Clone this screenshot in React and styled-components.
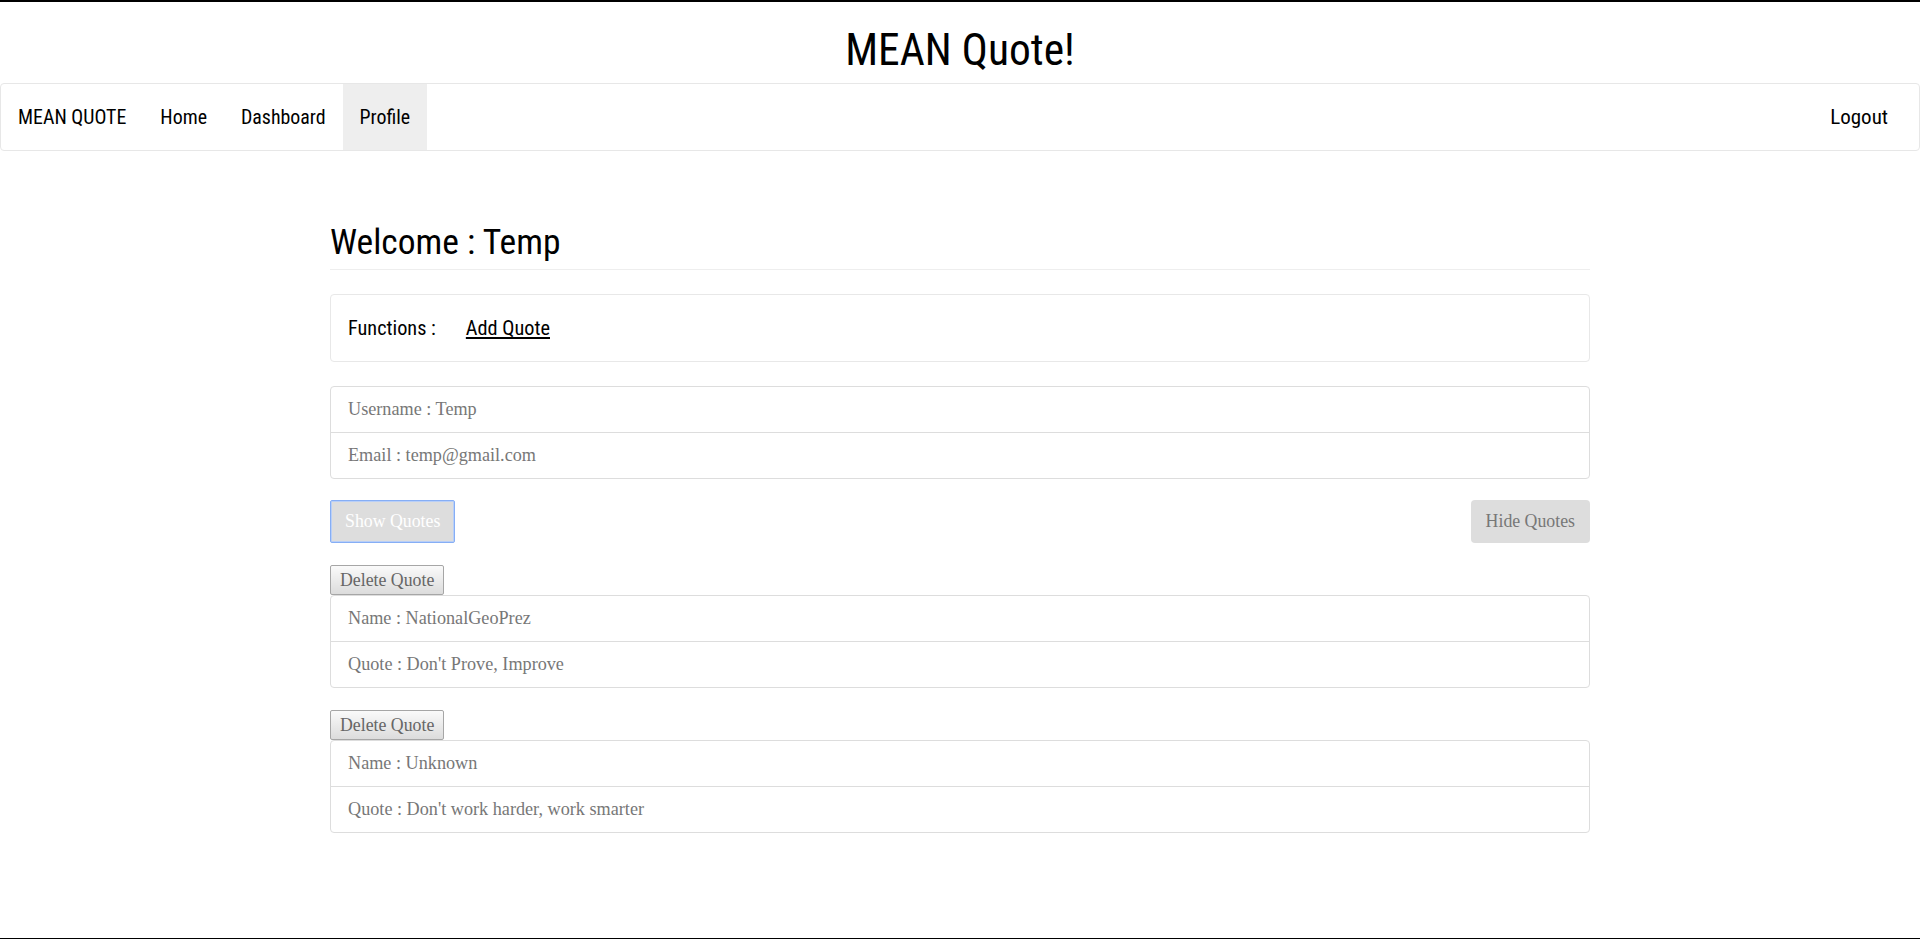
import React from "react";
import styled, { createGlobalStyle } from 'styled-components'

const GlobalStyle = createGlobalStyle`
    html, body {
        margin : 0;
        padding : 0;
        background : #fff;
    }
    body {
        font-family : "Liberation Serif", serif;
    }
`

const narrow = `"Roboto Condensed", "Roboto", sans-serif`

const Page = styled.div`
    height : 939px;
    box-sizing : border-box;
    border-top : 2px solid #000;
    border-bottom : 1px solid #000;
    overflow : hidden;
`

const Title = styled.h1`
    margin : 0;
    padding-top : 24px;
    height : 50px;
    line-height : 50px;
    text-align : center;
    font-family : ${narrow};
    font-stretch : condensed;
    font-size : 43.5px;
    font-weight : normal;
    color : #000;
`

const Navbar = styled.nav`
    margin-top : 7px;
    height : 68px;
    box-sizing : border-box;
    border : 1px solid #e7e7e7;
    border-radius : 4px;
    display : flex;
    justify-content : space-between;
`

const NavGroup = styled.div`
    display : flex;
`

const NavItem = styled.a`
    display : flex;
    align-items : center;
    padding : 0 ${props => props.$right ? '31px' : '17px'} 0 17px;
    font-family : ${narrow};
    font-stretch : condensed;
    font-size : ${props => props.$size || '19.9px'};
    color : #000;
    text-decoration : none;
    background : ${props => props.$active ? '#eeeeee' : 'transparent'};
`

const Container = styled.main`
    width : 1260px;
    margin : 71px auto 0;
`

const Heading = styled.h2`
    margin : 0;
    font-family : ${narrow};
    font-stretch : condensed;
    font-size : 35.5px;
    font-weight : normal;
    line-height : 40px;
    padding-bottom : 7px;
    border-bottom : 1px solid #eee;
    color : #000;
`

const Panel = styled.div`
    margin-top : 24px;
    height : 68px;
    box-sizing : border-box;
    border : 1px solid #e8e8e8;
    border-radius : 4px;
    display : flex;
    align-items : center;
    gap : 30px;
    padding : 0 17px;
    font-family : ${narrow};
    font-stretch : condensed;
    font-size : 20.3px;
    color : #000;
`

const PanelLink = styled.a`
    color : #000;
    text-decoration : underline;
    text-underline-offset : 2px;
`

const ListGroup = styled.ul`
    list-style : none;
    margin : ${props => props.$spaced ? '24px' : '0'} 0 0;
    padding : 0;
    border : 1px solid #ddd;
    border-radius : 4px;
`

const ListItem = styled.li`
    height : 45px;
    display : flex;
    align-items : center;
    padding : 0 17px;
    font-size : 18.2px;
    color : #777;
    & + & {
        border-top : 1px solid #ddd;
    }
`

const ButtonRow = styled.div`
    margin-top : 21px;
    display : flex;
    justify-content : space-between;
`

const ToggleButton = styled.button`
    height : 43px;
    padding : 0 ${props => props.$focused ? '14px' : '15px'};
    box-sizing : border-box;
    background : #dddddd;
    font-family : "Liberation Serif", serif;
    font-size : 17.8px;
    color : ${props => props.$focused ? '#fff' : '#777'};
    border : ${props => props.$focused ? '1px solid #86aef5' : 'none'};
    box-shadow : ${props => props.$focused ? 'inset 0 0 0 1px #b9cff7' : 'none'};
    border-radius : ${props => props.$focused ? '2px' : '4px'};
    cursor : pointer;
`

const QuoteBlock = styled.section`
    margin-top : 22px;
`

const DeleteButton = styled.button`
    display : block;
    height : 30px;
    box-sizing : border-box;
    padding : 0 9px;
    border : 1px solid #a6a6a6;
    border-radius : 2px;
    background : linear-gradient(#fafafa, #dcdcdc);
    font-family : "Liberation Serif", serif;
    font-size : 17.8px;
    color : #666;
`

const quotes = [
    { name : 'NationalGeoPrez', quote : "Don't Prove, Improve" },
    { name : 'Unknown', quote : "Don't work harder, work smarter" },
]

function App(){
    return(
        <Page>
            <GlobalStyle />
            <Title>MEAN Quote!</Title>
            <Navbar>
                <NavGroup>
                    <NavItem href="#">MEAN QUOTE</NavItem>
                    <NavItem href="#">Home</NavItem>
                    <NavItem href="#">Dashboard</NavItem>
                    <NavItem href="#" $active>Profile</NavItem>
                </NavGroup>
                <NavGroup>
                    <NavItem href="#" $right $size="21px">Logout</NavItem>
                </NavGroup>
            </Navbar>
            <Container>
                <Heading>Welcome : Temp</Heading>
                <Panel>
                    <span>Functions :</span>
                    <PanelLink href="#">Add Quote</PanelLink>
                </Panel>
                <ListGroup $spaced>
                    <ListItem>Username : Temp</ListItem>
                    <ListItem>Email : temp@gmail.com</ListItem>
                </ListGroup>
                <ButtonRow>
                    <ToggleButton $focused>Show Quotes</ToggleButton>
                    <ToggleButton>Hide Quotes</ToggleButton>
                </ButtonRow>
                {quotes.map((q, i) => (
                    <QuoteBlock key={i}>
                        <DeleteButton>Delete Quote</DeleteButton>
                        <ListGroup>
                            <ListItem>Name : {q.name}</ListItem>
                            <ListItem>Quote : {q.quote}</ListItem>
                        </ListGroup>
                    </QuoteBlock>
                ))}
            </Container>
        </Page>
    )
}

export default App
